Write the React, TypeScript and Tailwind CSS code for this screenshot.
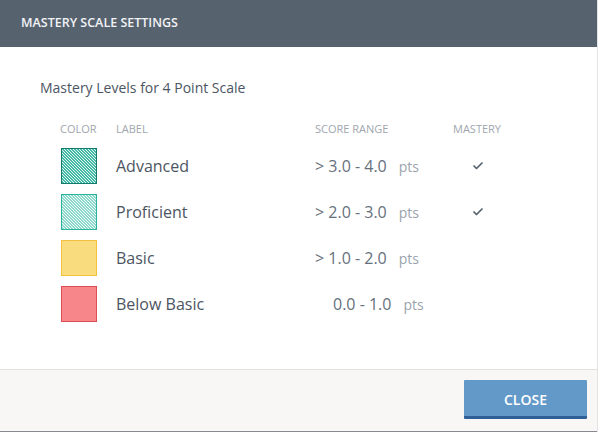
import { Check } from "lucide-react"

type Level = {
  label: string
  range: string
  mastery: boolean
  swatch: string
  indent?: boolean
}

const levels: Level[] = [
  {
    label: "Advanced",
    range: "> 3.0 - 4.0",
    mastery: true,
    swatch:
      "border-[#137a6c] bg-[length:3px_3px] bg-[linear-gradient(45deg,#45bba7_33%,#e2f5f1_33%,#e2f5f1_50%,#45bba7_50%,#45bba7_83%,#e2f5f1_83%)]",
  },
  {
    label: "Proficient",
    range: "> 2.0 - 3.0",
    mastery: true,
    swatch:
      "border-[#27b39c] bg-[length:3px_3px] bg-[linear-gradient(45deg,#8dd9cb_33%,#f2fbf9_33%,#f2fbf9_50%,#8dd9cb_50%,#8dd9cb_83%,#f2fbf9_83%)]",
  },
  { label: "Basic", range: "> 1.0 - 2.0", mastery: false, swatch: "border-[#f3c140] bg-[#f9dc7d]" },
  { label: "Below Basic", range: "0.0 - 1.0", mastery: false, swatch: "border-[#de4d55] bg-[#f7868b]", indent: true },
]

export default function App() {
  return (
    <div className="w-[598px] h-[432px] flex flex-col bg-white font-['Open_Sans',sans-serif] border-r border-[#e3e3e3]">
      <div className="h-[47px] shrink-0 bg-[#57626f] flex items-center px-[21px]">
        <h2 className="text-[12.5px] font-semibold text-[#f1f3f5]">MASTERY SCALE SETTINGS</h2>
      </div>

      <div className="flex-1 pt-[31px] pl-[40px]">
        <p className="text-[14px] leading-[19px] text-[#4c5562]">Mastery Levels for 4 Point Scale</p>

        <div className="mt-[24px] pl-[20px] grid grid-cols-[56px_199px_138px_49px] text-[11px] leading-[15px] text-[#a0a6ad]">
          <span>COLOR</span>
          <span>LABEL</span>
          <span>SCORE RANGE</span>
          <span>MASTERY</span>
        </div>

        <div className="mt-[12px] pl-[21px] flex flex-col gap-[10px]">
          {levels.map((lvl) => (
            <div key={lvl.label} className="grid grid-cols-[55px_199px_138px_49px] items-center h-[36px]">
              <div className={`w-[36px] h-[36px] border ${lvl.swatch}`} />
              <span className="text-[16px] text-[#4c5562]">{lvl.label}</span>
              <span className={`flex items-baseline text-[#66707c] ${lvl.indent ? "pl-[18px]" : ""}`}>
                <span className="text-[16px]">{lvl.range}</span>
                <span className="ml-[12px] text-[14px] text-[#9aa3ad]">pts</span>
              </span>
              <span className="flex justify-center">
                {lvl.mastery && <Check className="w-[12px] h-[12px] text-[#56616e]" strokeWidth={3.5} />}
              </span>
            </div>
          ))}
        </div>
      </div>

      <div className="h-[62px] shrink-0 bg-[#f8f7f5] border-t border-[#e2e0dc] flex justify-end items-start pt-[10px] pr-[10px]">
        <button className="w-[123px] h-[39px] pt-[3px] bg-[#6399c9] border-b-[3px] border-[#2e5f96] text-white text-[14px] font-semibold rounded-[1px]">
          CLOSE
        </button>
      </div>
      <div className="h-[1px] shrink-0 bg-[#878b90]" />
    </div>
  )
}
